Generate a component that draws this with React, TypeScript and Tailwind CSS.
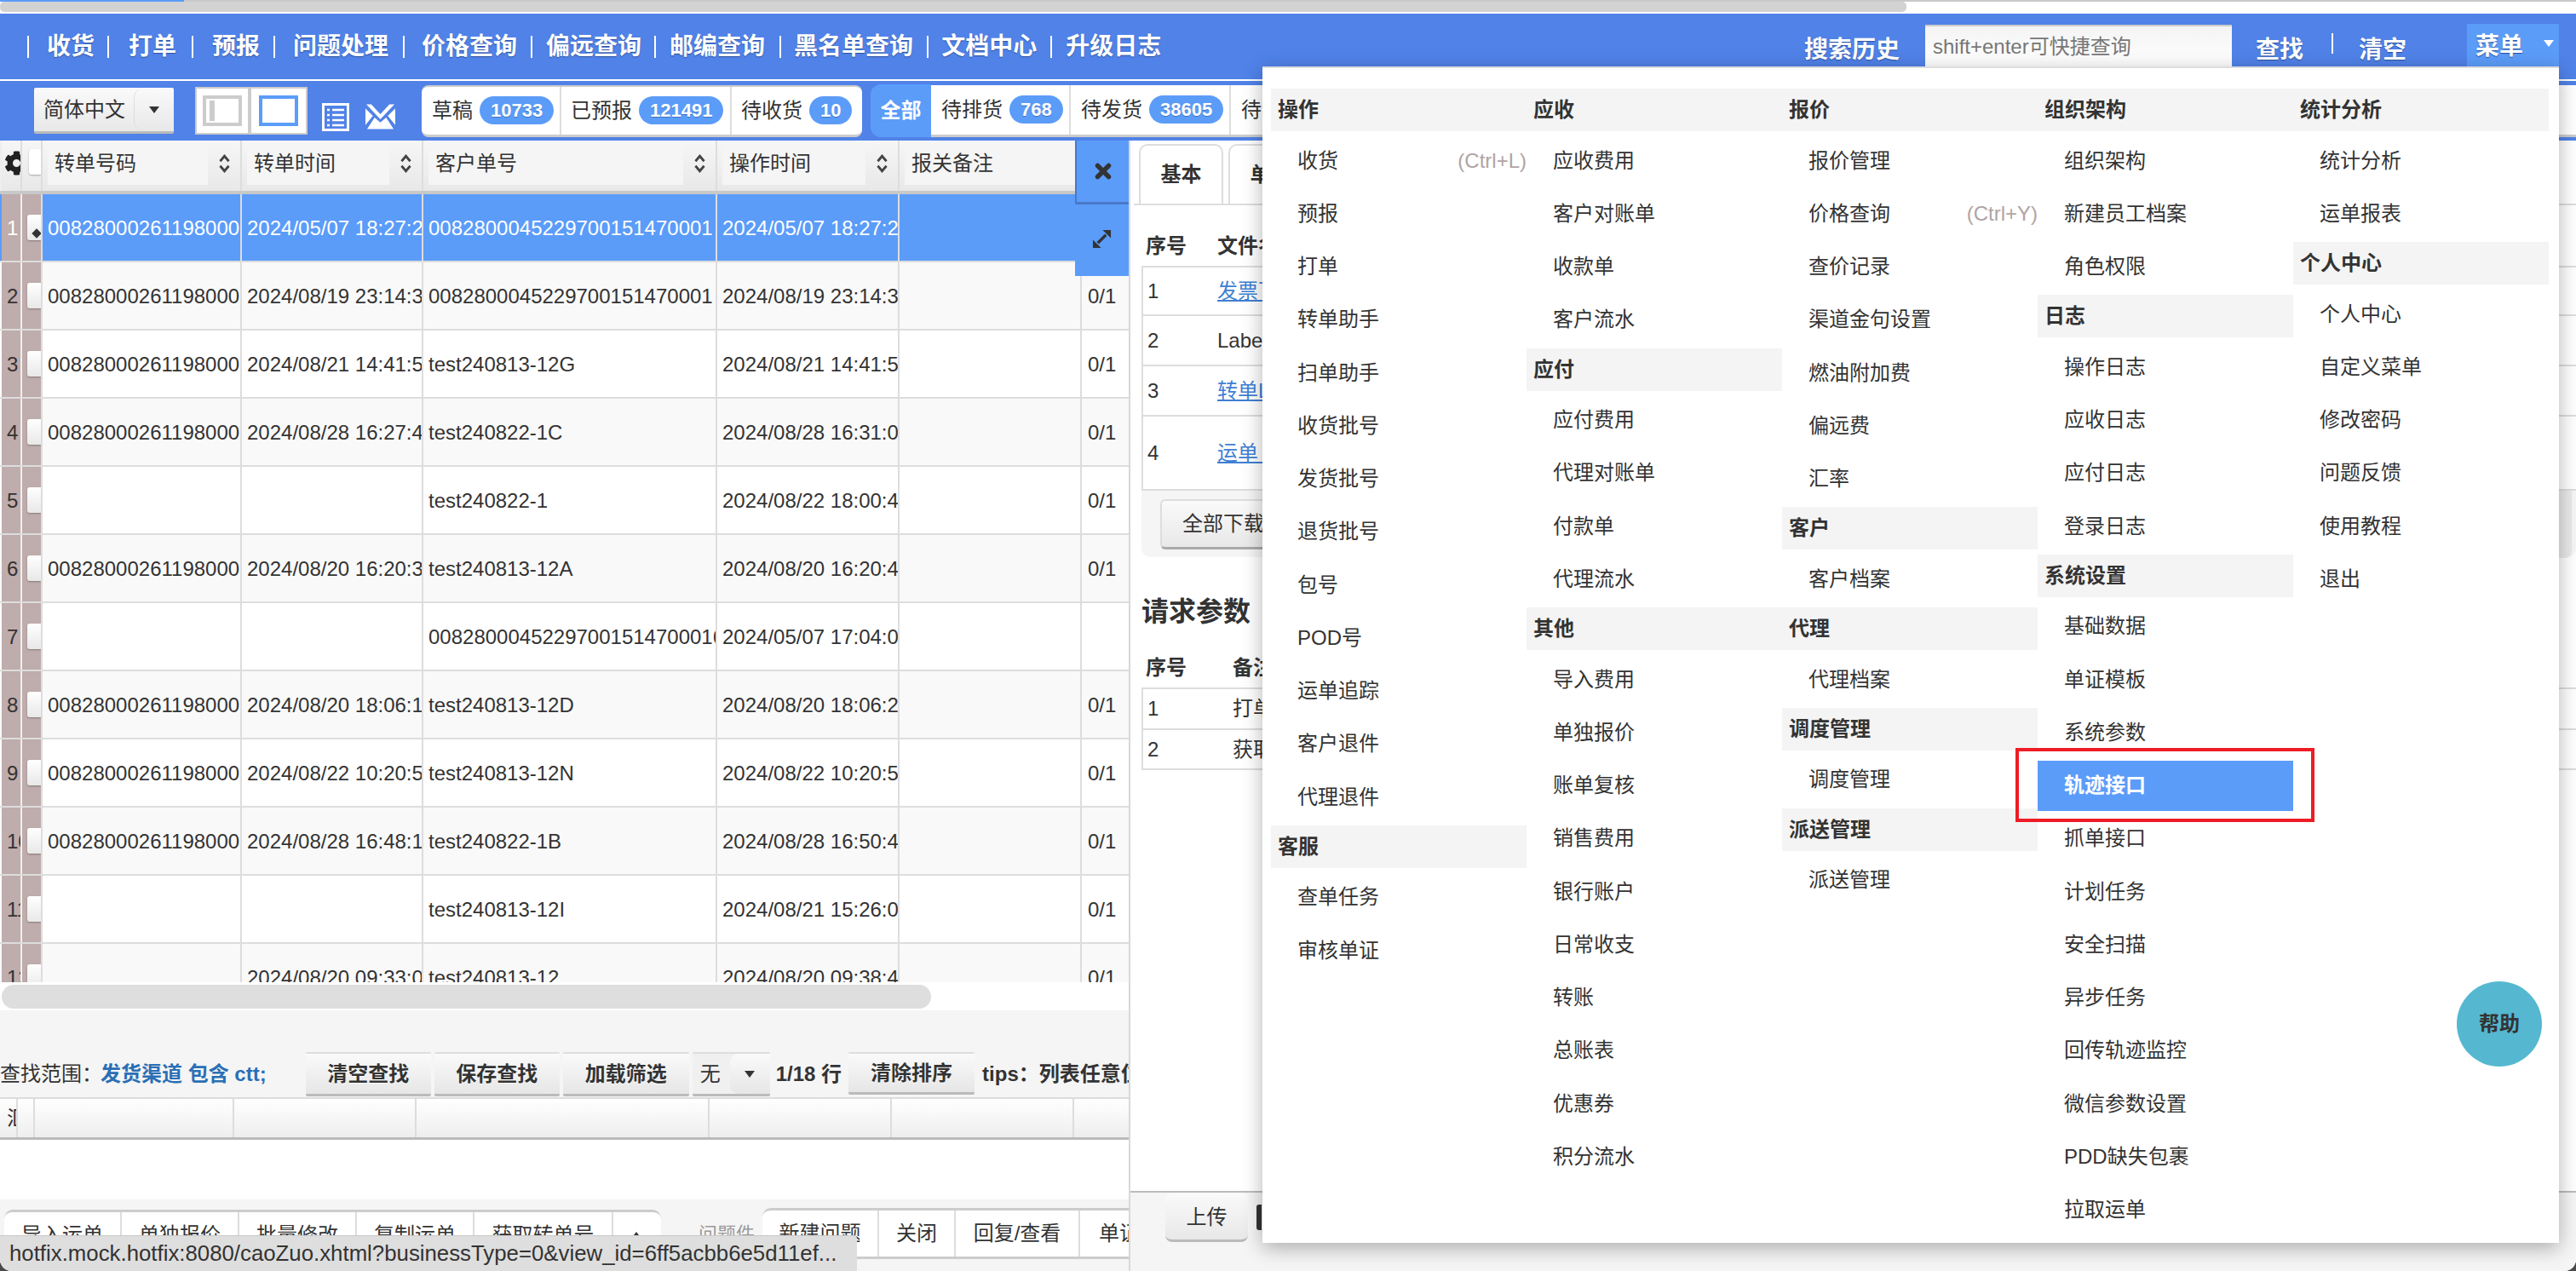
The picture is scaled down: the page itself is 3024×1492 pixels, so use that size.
import { FaCog } from "react-icons/fa";

const navItems = [
  { label: "收货", cls: "ml-[21px] mr-[15px]" },
  { label: "打单", cls: "ml-[23px] mr-[18px]" },
  { label: "预报", cls: "ml-[22px] mr-[16px]" },
  { label: "问题处理", cls: "ml-[21px] mr-[17px]" },
  { label: "价格查询", cls: "ml-[20px] mr-[16px]" },
  { label: "偏远查询", cls: "ml-[16px] mr-[15px]" },
  { label: "邮编查询", cls: "ml-[16px] mr-[17px]" },
  { label: "黑名单查询", cls: "ml-[15px] mr-[16px]" },
  { label: "文档中心", cls: "ml-[15px] mr-[16px]" },
  { label: "升级日志", cls: "ml-[16px]" },
];

const gridCols =
  "grid grid-cols-[26px_24px_234px_213px_345px_214px_214px_55px]";

const rows = [
  ["00828000261198000", "2024/05/07 18:27:21", "0082800045229700151470001", "2024/05/07 18:27:21", ""],
  ["00828000261198000", "2024/08/19 23:14:33", "0082800045229700151470001", "2024/08/19 23:14:33", "0/1"],
  ["00828000261198000", "2024/08/21 14:41:52", "test240813-12G", "2024/08/21 14:41:52", "0/1"],
  ["00828000261198000", "2024/08/28 16:27:44", "test240822-1C", "2024/08/28 16:31:02", "0/1"],
  ["", "", "test240822-1", "2024/08/22 18:00:41", "0/1"],
  ["00828000261198000", "2024/08/20 16:20:33", "test240813-12A", "2024/08/20 16:20:44", "0/1"],
  ["", "", "00828000452297001514700016", "2024/05/07 17:04:01", ""],
  ["00828000261198000", "2024/08/20 18:06:15", "test240813-12D", "2024/08/20 18:06:22", "0/1"],
  ["00828000261198000", "2024/08/22 10:20:51", "test240813-12N", "2024/08/22 10:20:55", "0/1"],
  ["00828000261198000", "2024/08/28 16:48:12", "test240822-1B", "2024/08/28 16:50:42", "0/1"],
  ["", "", "test240813-12I", "2024/08/21 15:26:03", "0/1"],
  ["", "2024/08/20 09:33:05", "test240813-12", "2024/08/20 09:38:44", "0/1"],
];

type Entry = { title?: string; label?: string; hint?: string; active?: boolean };

const menuColumns: Entry[][] = [
  [
    { title: "操作" },
    { label: "收货", hint: "(Ctrl+L)" },
    { label: "预报" },
    { label: "打单" },
    { label: "转单助手" },
    { label: "扫单助手" },
    { label: "收货批号" },
    { label: "发货批号" },
    { label: "退货批号" },
    { label: "包号" },
    { label: "POD号" },
    { label: "运单追踪" },
    { label: "客户退件" },
    { label: "代理退件" },
    { title: "客服" },
    { label: "查单任务" },
    { label: "审核单证" },
  ],
  [
    { title: "应收" },
    { label: "应收费用" },
    { label: "客户对账单" },
    { label: "收款单" },
    { label: "客户流水" },
    { title: "应付" },
    { label: "应付费用" },
    { label: "代理对账单" },
    { label: "付款单" },
    { label: "代理流水" },
    { title: "其他" },
    { label: "导入费用" },
    { label: "单独报价" },
    { label: "账单复核" },
    { label: "销售费用" },
    { label: "银行账户" },
    { label: "日常收支" },
    { label: "转账" },
    { label: "总账表" },
    { label: "优惠券" },
    { label: "积分流水" },
  ],
  [
    { title: "报价" },
    { label: "报价管理" },
    { label: "价格查询", hint: "(Ctrl+Y)" },
    { label: "查价记录" },
    { label: "渠道金句设置" },
    { label: "燃油附加费" },
    { label: "偏远费" },
    { label: "汇率" },
    { title: "客户" },
    { label: "客户档案" },
    { title: "代理" },
    { label: "代理档案" },
    { title: "调度管理" },
    { label: "调度管理" },
    { title: "派送管理" },
    { label: "派送管理" },
  ],
  [
    { title: "组织架构" },
    { label: "组织架构" },
    { label: "新建员工档案" },
    { label: "角色权限" },
    { title: "日志" },
    { label: "操作日志" },
    { label: "应收日志" },
    { label: "应付日志" },
    { label: "登录日志" },
    { title: "系统设置" },
    { label: "基础数据" },
    { label: "单证模板" },
    { label: "系统参数" },
    { label: "轨迹接口", active: true },
    { label: "抓单接口" },
    { label: "计划任务" },
    { label: "安全扫描" },
    { label: "异步任务" },
    { label: "回传轨迹监控" },
    { label: "微信参数设置" },
    { label: "PDD缺失包裹" },
    { label: "拉取运单" },
  ],
  [
    { title: "统计分析" },
    { label: "统计分析" },
    { label: "运单报表" },
    { title: "个人中心" },
    { label: "个人中心" },
    { label: "自定义菜单" },
    { label: "修改密码" },
    { label: "问题反馈" },
    { label: "使用教程" },
    { label: "退出" },
  ],
];

function Caret({ className }: { className?: string }) {
  return (
    <svg viewBox="0 0 14 10" className={className}>
      <path d="M1 1h12L7 9z" fill="currentColor" />
    </svg>
  );
}

function SortArrows() {
  return (
    <svg viewBox="0 0 16 26" className="h-[24px] w-[15px] text-[#444]">
      <path d="M2.5 10 8 3.5 13.5 10M2.5 16 8 22.5 13.5 16" fill="none" stroke="currentColor" strokeWidth="3" />
    </svg>
  );
}

function Pill({ children }: { children: string }) {
  return (
    <span className="ml-[8px] flex h-[33px] items-center rounded-full bg-[#5b9cf9] px-[13px] text-[22px] font-bold text-white [text-shadow:0_1px_0_#3a70c0]">
      {children}
    </span>
  );
}

function HeaderCell({ label, sort = true }: { label: string; sort?: boolean }) {
  return (
    <div className="flex h-[59px] items-start overflow-hidden border-r-2 border-[#ddd] bg-gradient-to-b from-[#f6f6f6] to-[#e8e8e8] pl-[6px] pt-[2px]">
      <div className="flex h-[50px] flex-1 items-center overflow-hidden bg-[#f5f5f5] pl-[8px] text-[24px] text-[#333] whitespace-nowrap">
        {label}
      </div>
      <div className={sort ? "flex h-[50px] w-[38px] shrink-0 items-center justify-center" : "w-[6px] shrink-0"}>
        {sort && <SortArrows />}
      </div>
    </div>
  );
}

function Cell({ children }: { children?: string }) {
  return (
    <div className="flex items-center overflow-hidden border-r-2 border-[#ddd] pl-[6px] pt-[2px] whitespace-nowrap">
      {children}
    </div>
  );
}

function TableRow({ row, index }: { row: string[]; index: number }) {
  const selected = index === 0;
  const bg = selected
    ? "bg-[#5b9cf9] text-white"
    : index % 2 === 1
      ? "bg-[#f9f9f9] text-[#333]"
      : "bg-white text-[#333]";
  return (
    <div className={`${gridCols} h-[80px] border-b-2 border-[#ddd] text-[24px] ${bg}`}>
      <div className="ml-[2px] flex items-center overflow-hidden border-r-2 border-[#f0f0f0] bg-[#bfacac] pl-[6px] pt-[2px]">
        {index + 1}
      </div>
      <div className="flex items-center justify-end overflow-hidden border-r-2 border-[#ddd] bg-[#bfacac]">
        <div className="flex h-[30px] w-[16px] items-end justify-center rounded-l-[3px] bg-gradient-to-b from-white to-[#e8e8e8] shadow-[0_1px_2px_rgba(0,0,0,0.3)]">
          {selected && <span className="mb-[4px] ml-[6px] h-[8px] w-[8px] rotate-45 bg-[#333]" />}
        </div>
      </div>
      {row.slice(0, 4).map((v, i) => (
        <Cell key={i}>{v}</Cell>
      ))}
      <Cell />
      <div className="flex items-center overflow-hidden pl-[7px] pt-[2px]">{row[4]}</div>
    </div>
  );
}

function GrayButton({ label, className }: { label: string; className: string }) {
  return (
    <div
      className={`flex shrink-0 items-center justify-center rounded-[2px] border-t-2 border-b-[3px] border-t-[#ddd] border-b-[#bbb] bg-gradient-to-b from-[#fafafa] to-[#e6e6e6] text-[24px] font-bold text-[#333] [text-shadow:0_1px_0_#fff] ${className}`}
    >
      {label}
    </div>
  );
}

function MenuColumn({ entries }: { entries: Entry[] }) {
  return (
    <div className="w-[300px]">
      {entries.map((e, i) =>
        e.title ? (
          <div key={i} className="mt-[2px] mb-[3.5px] flex h-[50px] items-center bg-[#f4f4f4] pl-[8px] text-[24px] font-bold text-[#333]">
            {e.title}
          </div>
        ) : (
          <div key={i} className="flex h-[62.26px] items-center">
            <div
              className={`flex h-[59px] w-full items-center justify-between pl-[31px] text-[24px] ${
                e.active ? "bg-[#5b9cf9] font-bold text-white" : "text-[#333]"
              }`}
            >
              <span>{e.label}</span>
              {e.hint && <span className="text-[#b0a4a4]">{e.hint}</span>}
            </div>
          </div>
        )
      )}
    </div>
  );
}

function DocTable({
  widthCol,
  head,
  rows: docRows,
}: {
  widthCol: string;
  head: string;
  rows: { n: string; text: string; link?: boolean; h: string }[];
}) {
  return (
    <>
      <div className="flex h-[47px] items-center pl-[5px] text-[24px] font-bold text-[#333]">
        <span className={widthCol}>序号</span>
        <span className="ml-[2px] whitespace-nowrap">{head}</span>
      </div>
      <div className="border-2 border-r-0 border-[#ddd]">
        {docRows.map((r, i) => (
          <div
            key={i}
            className={`flex items-center pl-[5px] text-[24px] text-[#333] whitespace-nowrap ${r.h} ${i > 0 ? "border-t-2 border-[#ddd]" : ""}`}
          >
            <span className={widthCol}>{r.n}</span>
            <span className={r.link ? "text-[#3f7fd4] underline" : ""}>{r.text}</span>
          </div>
        ))}
      </div>
    </>
  );
}

export default function App() {
  return (
    <div className="h-[1492px] w-[3024px] bg-[#4a4a4a] font-['Liberation_Sans','Noto_Sans_CJK_SC',sans-serif]">
      <div className="relative flex h-full flex-col overflow-hidden rounded-b-[14px] bg-white">
        {/* browser scroll strip */}
        <div className="relative h-[16px] shrink-0 bg-white">
          <div className="h-[2px] w-full bg-[#c9c9c9]">
            <div className="h-full w-[216px] bg-[#5b9cf9]" />
          </div>
          <div className="h-[12px] w-[2238px] rounded-r-[5px] rounded-l-[5px] bg-[#d2d2d2]" />
        </div>

        {/* top nav */}
        <div className="flex h-[77px] shrink-0 items-center bg-[#5082e8] pl-[32px] text-[28px] font-bold text-white [text-shadow:0_1px_1px_#2c4f99]">
          {navItems.map((n) => (
            <div key={n.label} className="flex items-center">
              <span className="h-[26px] w-[2px] bg-white" />
              <span className={n.cls}>{n.label}</span>
            </div>
          ))}
          <div className="ml-auto flex h-full items-start">
            <span className="mt-[22px] mr-[30px]">搜索历史</span>
            <div className="mt-[13px] flex h-[49px] w-[360px] items-center border-t-2 border-[#ccc] bg-gradient-to-b from-[#f4f4f4] to-white pl-[9px] text-[24px] font-normal text-[#777] [text-shadow:none]">
              shift+enter可快捷查询
            </div>
            <span className="mt-[22px] ml-[28px]">查找</span>
            <span className="mt-[23px] ml-[33px] h-[24px] w-[2px] bg-white" />
            <span className="mt-[22px] ml-[30px]">清空</span>
            <div className="mt-[12px] mr-[20px] ml-[71px] flex h-[65px] w-[108px] items-start bg-[#5b9cf9] pt-[6px] pl-[10px]">
              <span>菜单</span>
              <Caret className="mt-[12px] ml-[23px] h-[10px] w-[14px]" />
            </div>
          </div>
        </div>
        <div className="h-[2px] shrink-0 bg-white" />

        {/* toolbar */}
        <div className="flex h-[70px] shrink-0 items-center overflow-hidden bg-[#5082e8]">
          <div className="ml-[40px] flex h-[54px] w-[164px] items-center rounded-[2px] border-b-[3px] border-[#bbb] bg-gradient-to-b from-[#fafafa] to-[#e8e8e8] text-[24px] text-[#333]">
            <span className="pl-[11px]">简体中文</span>
            <div className="ml-auto flex h-full w-[47px] items-center justify-center rounded-l-[12px] border-l border-[#ddd]">
              <Caret className="h-[10px] w-[14px] text-[#333]" />
            </div>
          </div>
          <div className="ml-[25px] flex h-[56px] w-[132px] border-2 border-[#ccc] bg-white">
            <div className="flex w-[64px] items-center justify-center border-r-[4px] border-[#ccc]">
              <div className="flex h-[36px] w-[46px] items-center border-[4px] border-[#ccc] pl-[4px]">
                <span className="h-[24px] w-[6px] bg-[#ccc]" />
              </div>
            </div>
            <div className="flex flex-1 items-center justify-center">
              <div className="h-[36px] w-[46px] border-[4px] border-[#5b9cf9]" />
            </div>
          </div>
          <svg viewBox="0 0 32 33" className="mt-[14px] ml-[17px] h-[33px] w-[32px]">
            <rect width="32" height="33" fill="#fff" />
            <rect x="3" y="3" width="26" height="27" fill="#5082e8" />
            <path d="M6 8h3M12 8h14M6 14h3M12 14h14M6 20h3M12 20h14M6 26h3M12 26h14" stroke="#fff" strokeWidth="2.5" />
          </svg>
          <svg viewBox="0 0 36 30" className="mt-[14px] ml-[19px] h-[30px] w-[35px]">
            <path d="M1 0h6L18 12 29 0h6L18 18zM0 5l9 9-9 11zM36 5l-9 9 9 11zM11 16l7 6 7-6 9 14H2z" fill="#fff" />
          </svg>

          <div className="ml-[31px] flex h-[61px] w-[517px] items-center rounded-[8px] border-t-2 border-b-[3px] border-[#ccc] bg-white text-[24px] text-[#333]">
            <div className="flex h-full w-[164px] items-center border-r-2 border-[#ddd] pl-[12px]">
              草稿<Pill>10733</Pill>
            </div>
            <div className="flex h-full w-[200px] items-center border-r-2 border-[#ddd] pl-[11px]">
              已预报<Pill>121491</Pill>
            </div>
            <div className="flex h-full flex-1 items-center pl-[11px]">
              待收货<Pill>10</Pill>
            </div>
          </div>
          <div className="ml-[10px] flex h-[62px] w-[71px] shrink-0 items-center justify-center rounded-l-[12px] bg-[#5b9cf9] text-[24px] font-bold text-white">
            全部
          </div>
          <div className="flex h-[61px] flex-1 items-center border-b-[3px] border-[#ccc] bg-white text-[24px] text-[#333] whitespace-nowrap">
            <div className="flex h-full w-[164px] shrink-0 items-center border-r-2 border-[#ddd] pl-[12px]">
              待排货<Pill>768</Pill>
            </div>
            <div className="flex h-full w-[188px] shrink-0 items-center border-r-2 border-[#ddd] pl-[12px]">
              待发货<Pill>38605</Pill>
            </div>
            <div className="pl-[12px]">待</div>
          </div>
        </div>

        {/* main area */}
        <div className="flex min-h-0 flex-1">
          <div className="relative flex w-[1325px] shrink-0 flex-col overflow-hidden">
            <div className="h-[988px] shrink-0 overflow-hidden bg-white">
              <div className={`${gridCols} h-[63px] border-b-[4px] border-[#c8c8c8] bg-[#eee]`}>
                <div className="ml-[2px] flex h-[59px] items-start overflow-hidden border-r-2 border-[#ddd] bg-gradient-to-b from-[#f6f6f6] to-[#e8e8e8] pt-[12px] pl-[3px]">
                  <FaCog className="h-[29px] w-[29px] shrink-0 text-[#222]" />
                </div>
                <div className="flex h-[59px] items-start justify-end overflow-hidden border-r-2 border-[#ddd] bg-gradient-to-b from-[#f6f6f6] to-[#e8e8e8] pt-[10px]">
                  <div className="h-[30px] w-[14px] rounded-l-[3px] bg-white shadow-[0_1px_2px_rgba(0,0,0,0.3)]" />
                </div>
                <HeaderCell label="转单号码" />
                <HeaderCell label="转单时间" />
                <HeaderCell label="客户单号" />
                <HeaderCell label="操作时间" />
                <HeaderCell label="报关备注" sort={false} />
                <div className="bg-[#f0f0f0]" />
              </div>
              {rows.map((r, i) => (
                <TableRow key={i} row={r} index={i} />
              ))}
            </div>

            {/* X / expand block lies over the table */}
            <div className="absolute top-0 left-[1262px] flex h-[159px] w-[63px] flex-col bg-[#5b9cf9]">
              <div className="flex h-[75px] items-center justify-center border-b-[3px] border-l-2 border-[#4a78c8]">
                <svg viewBox="0 0 20 20" className="h-[20px] w-[20px]">
                  <path d="M3.5 3.5 16.5 16.5M16.5 3.5 3.5 16.5" stroke="#333" strokeWidth="5.5" strokeLinecap="round" />
                </svg>
              </div>
              <div className="flex flex-1 items-center justify-center">
                <svg viewBox="0 0 24 24" className="mb-[3px] h-[23px] w-[23px]">
                  <path d="M23 1v10l-10-10zM1 23V13l10 10z" fill="#333" />
                  <path d="M7 17 17 7" stroke="#333" strokeWidth="3.5" />
                </svg>
              </div>
            </div>

            <div className="h-[33px] shrink-0 bg-white pt-[3px] pl-[2px]">
              <div className="h-[28px] w-[1091px] rounded-[14px] bg-[#dedede]" />
            </div>

            <div className="flex h-[102px] shrink-0 items-end overflow-hidden bg-[#f5f5f5] pb-[1px] text-[24px] whitespace-nowrap">
              <div className="flex h-[52px] shrink-0 items-center text-[#333]">
                查找范围：
                <span className="-ml-[2px] font-bold text-[#2a6fb5]">发货渠道 包含 ctt;</span>
              </div>
              <div className="ml-[46px] flex h-[52px] shrink-0 gap-[4px]">
                <GrayButton label="清空查找" className="w-[147px]" />
                <GrayButton label="保存查找" className="w-[147px]" />
                <GrayButton label="加载筛选" className="w-[148px]" />
                <div className="flex w-[91px] shrink-0 items-center rounded-[2px] border-t-2 border-b-[3px] border-t-[#ddd] border-b-[#bbb] bg-[#f0f0f0] pl-[9px] text-[#333]">
                  无
                  <div className="ml-auto flex h-full w-[47px] items-center justify-center rounded-l-[10px] bg-gradient-to-b from-[#fafafa] to-[#e6e6e6]">
                    <Caret className="h-[10px] w-[14px] text-[#333]" />
                  </div>
                </div>
              </div>
              <div className="ml-[7px] flex h-[52px] shrink-0 items-center font-bold text-[#333]">1/18 行</div>
              <GrayButton label="清除排序" className="mb-[2px] ml-[8px] h-[50px] w-[148px]" />
              <div className="ml-[9px] flex h-[52px] shrink-0 items-center font-bold text-[#333]">tips：列表任意位置</div>
            </div>

            <div className="grid h-[50px] shrink-0 grid-cols-[21px_20px_234px_214px_344px_214px_214px_64px] border-t-2 border-b-[3px] border-t-[#ddd] border-b-[#bbb] bg-gradient-to-b from-white to-[#eee]">
              <div className="flex items-center overflow-hidden border-r-2 border-[#ddd] pl-[8px] text-[24px] text-[#333]">汇</div>
              <div className="border-r-2 border-[#ddd]" />
              <div className="border-r-2 border-[#ddd]" />
              <div className="border-r-2 border-[#ddd]" />
              <div className="border-r-2 border-[#ddd]" />
              <div className="border-r-2 border-[#ddd]" />
              <div className="border-r-2 border-[#ddd]" />
              <div />
            </div>
            <div className="h-[70px] shrink-0 bg-white" />

            <div className="flex min-h-0 flex-1 items-start overflow-hidden bg-[#f5f5f5] pt-[12px] pl-[5px] text-[24px] text-[#333] whitespace-nowrap">
              <div className="flex h-[56px] w-[771px] shrink-0 items-center rounded-t-[10px] border-t-[3px] border-[#ccc] bg-white">
                <span className="flex h-full w-[138px] items-center justify-center border-r-2 border-[#ddd]">导入运单</span>
                <span className="flex h-full w-[138px] items-center justify-center border-r-2 border-[#ddd]">单独报价</span>
                <span className="flex h-full w-[138px] items-center justify-center border-r-2 border-[#ddd]">批量修改</span>
                <span className="flex h-full w-[138px] items-center justify-center border-r-2 border-[#ddd]">复制运单</span>
                <span className="flex h-full w-[163px] items-center justify-center border-r-2 border-[#ddd]">获取转单号</span>
                <Caret className="ml-[20px] h-[10px] w-[14px] rotate-180 text-[#333]" />
              </div>
              <div className="ml-[44px] flex h-[56px] shrink-0 items-center text-[22px] text-[#999]">问题件</div>
              <div className="-mt-[2px] ml-[9px] flex h-[60px] w-[500px] shrink-0 items-center rounded-tl-[10px] border-t-[3px] border-b-[3px] border-[#ccc] bg-white">
                <span className="flex h-full w-[137px] items-center justify-center border-r-2 border-[#ddd]">新建问题</span>
                <span className="flex h-full w-[90px] items-center justify-center border-r-2 border-[#ddd]">关闭</span>
                <span className="flex h-full w-[146px] items-center justify-center border-r-2 border-[#ddd]">回复/查看</span>
                <span className="pl-[22px]">单证</span>
              </div>
            </div>
          </div>

          {/* right detail pane */}
          <div className="relative flex min-w-0 flex-1 flex-col border-l-2 border-[#d8d8d8] bg-white">
            <div className="min-h-0 flex-1 overflow-hidden">
              <div className="ml-[4px] flex h-[76px] items-end gap-[6px] border-b-2 border-[#ddd] pl-[6px]">
                <div className="flex h-[70px] w-[99px] items-center justify-center rounded-t-[10px] border-2 border-b-0 border-[#ddd] text-[24px] font-bold text-[#333]">
                  基本
                </div>
                <div className="flex h-[70px] w-[99px] items-center justify-center rounded-t-[10px] border-2 border-b-0 border-[#ddd] text-[24px] font-bold text-[#333]">
                  单证
                </div>
              </div>
              <div className="pl-[13px]">
                <div className="pt-[24px]">
                  <DocTable
                    widthCol="w-[82px] shrink-0"
                    head="文件名称"
                    rows={[
                      { n: "1", text: "发票下载", link: true, h: "h-[55px]" },
                      { n: "2", text: "Label标签", h: "h-[59px]" },
                      { n: "3", text: "转单Label", link: true, h: "h-[59px]" },
                      { n: "4", text: "运单 详情", link: true, h: "h-[87px]" },
                    ]}
                  />
                </div>
                <div className="flex h-[78px] items-center rounded-b-[10px] bg-[#f5f5f5] pl-[22px]">
                  <div className="flex h-[59px] w-[200px] items-center rounded-[6px] border-2 border-b-[3px] border-[#ddd] border-b-[#aaa] bg-gradient-to-b from-[#fafafa] to-[#e8e8e8] pl-[24px] text-[24px] text-[#333]">
                    全部下载
                  </div>
                </div>
                <h2 className="mt-[42px] h-[45px] text-[32px] leading-[45px] font-bold text-[#333]">请求参数</h2>
                <div className="mt-[19px]">
                  <DocTable
                    widthCol="w-[100px] shrink-0"
                    head="备注"
                    rows={[
                      { n: "1", text: "打单", h: "h-[46px]" },
                      { n: "2", text: "获取", h: "h-[47px]" },
                    ]}
                  />
                </div>
              </div>
            </div>
            <div className="h-[94px] shrink-0 border-t-2 border-[#bbb] bg-[#f5f5f5] pl-[41px]">
              <div className="flex items-start">
                <div className="flex h-[58px] w-[97px] items-center justify-center rounded-[8px] border-b-[3px] border-[#bbb] bg-gradient-to-b from-[#fafafa] to-[#e8e8e8] pt-[3px] text-[24px] text-[#333]">
                  上传
                </div>
                <div className="mt-[14px] ml-[10px] h-[30px] w-[6px] rounded-l-[3px] bg-[#333]" />
              </div>
            </div>
            <div className="absolute top-[411px] right-[5px] h-[79px] w-[15px] rounded-br-[8px] bg-[#eaeaea]" />
          </div>
        </div>

        {/* dropdown menu */}
        <div className="absolute top-[78px] left-[1482px] flex h-[1381px] w-[1522px] border-t-2 border-[#ddd] bg-white pt-[22px] pl-[10px] shadow-[0_6px_22px_rgba(0,0,0,0.3)]">
          {menuColumns.map((c, i) => (
            <MenuColumn key={i} entries={c} />
          ))}
        </div>

        {/* annotation */}
        <div className="absolute top-[878px] left-[2366px] h-[87px] w-[351px] border-[4px] border-[#ee1c25]" />

        {/* help bubble */}
        <div className="absolute top-[1152px] left-[2884px] flex h-[100px] w-[100px] items-center justify-center rounded-full bg-[#55b8d0] text-[24px] font-bold text-[#333]">
          帮助
        </div>

        {/* browser status bubble */}
        <div className="absolute bottom-0 left-0 flex h-[42px] w-[1006px] items-center overflow-hidden rounded-tr-[4px] border-t border-[#c8c8c8] bg-[#dedede] pl-[11px] text-[25.8px] text-[#333] whitespace-nowrap">
          hotfix.mock.hotfix:8080/caoZuo.xhtml?businessType=0&amp;view_id=6ff5acbb6e5d11ef...
        </div>
      </div>
    </div>
  );
}
